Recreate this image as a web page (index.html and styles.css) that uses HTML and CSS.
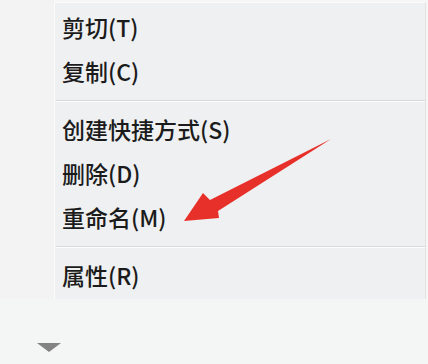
FILE: index.html
```html
<!DOCTYPE html>
<html lang="zh-CN">
<head>
  <meta charset="UTF-8">
  <meta name="viewport" content="width=device-width, initial-scale=1.0">
  <title>右键菜单</title>
  <link rel="stylesheet" href="styles.css">
</head>
<body>
  <div class="screen">
    <div class="menu-area">
      <div class="gutter"></div>
      <ul class="menu">
        <li class="item">剪切(T)</li>
        <li class="item">复制(C)</li>
        <li class="separator"></li>
        <li class="item">创建快捷方式(S)</li>
        <li class="item">删除(D)</li>
        <li class="item">重命名(M)</li>
        <li class="separator"></li>
        <li class="item">属性(R)</li>
      </ul>
    </div>
    <div class="footer">
      <span class="more"></span>
    </div>

    <!-- red pointer arrow -->
    <svg class="pointer" width="428" height="364" viewBox="0 0 428 364">
      <polygon points="184,221 203,193 210,200 331,139 218,211 219,218" fill="#e8302a"/>
    </svg>
  </div>
</body>
</html>
```

FILE: styles.css
```css
body {
  margin: 0;
  padding: 0;
  background-color: #f6f6f6;
  font-family: 'Noto Sans CJK SC', 'Noto Sans', sans-serif;
}

.screen {
  position: relative;
  width: 428px;
  height: 364px;
  overflow: hidden;
  display: flex;
  flex-direction: column;
}

.menu-area {
  display: flex;
  height: 299px;
}

.gutter {
  width: 54px;
  background-color: #f3f3f3;
}

.menu {
  list-style: none;
  margin: 0;
  padding: 3px 0 0 0;
  flex: 1;
  background-color: #eff0f1;
  border-left: 1px solid #fbfbfb;
  border-right: 1px solid #e2e2e2;
  border-top: 1px solid #fafafa;
  margin-top: 2px;
  margin-right: 2px;
  box-sizing: border-box;
}

.item {
  height: 44px;
  line-height: 44px;
  padding-left: 7px;
  font-size: 23px;
  font-weight: 500;
  color: #1b1b1b;
  margin-top: -1px;
  margin-bottom: 1px;
}

.separator {
  height: 14px;
  display: flex;
  flex-direction: column;
  justify-content: center;
}

.separator::before {
  content: '';
  display: block;
  height: 1px;
  margin-left: 1px;
  background-color: #d9d9d9;
  border-bottom: 1px solid #fdfdfd;
}

.footer {
  flex: 1;
  position: relative;
  background-color: #f4f5f5;
}

.more {
  position: absolute;
  left: 37px;
  top: 44px;
  width: 0;
  height: 0;
  border-left: 12px solid transparent;
  border-right: 12px solid transparent;
  border-top: 9px solid #838383;
}

.pointer {
  position: absolute;
  left: 0;
  top: 0;
  pointer-events: none;
}
```
